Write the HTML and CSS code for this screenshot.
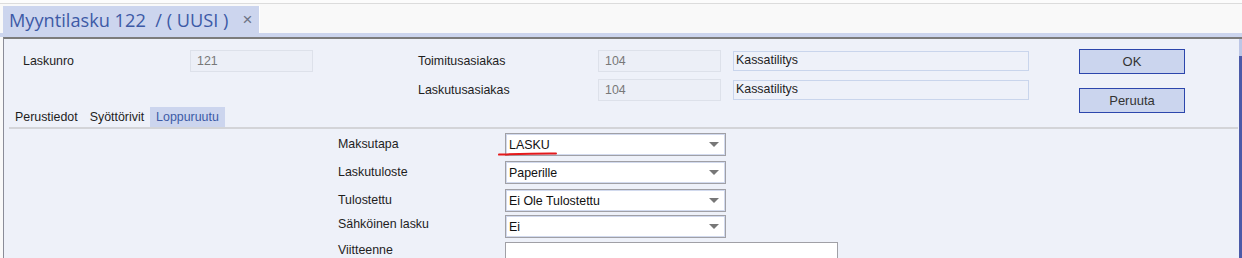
FILE: index.html
```html
<!DOCTYPE html>
<html lang="fi">
<head>
    <meta charset="UTF-8">
    <meta name="viewport" content="width=device-width, initial-scale=1.0">
    <title>Myyntilasku 122</title>
    <link rel="stylesheet" href="styles.css">
</head>
<body>
    <div class="topline"></div>
    <div class="docbar">
        <div class="doctab">
            <span class="doctab-title">Myyntilasku 122 &nbsp;/ ( UUSI )</span>
            <span class="doctab-close">×</span>
        </div>
    </div>
    <div class="docbar-under"></div>

    <div class="window">
        <div class="content">
            <div class="head">
                <div class="head-fields">
                    <span class="label">Laskunro</span>
                    <div class="field field-ro">121</div>
                    <span></span>
                    <span class="label">Toimitusasiakas</span>
                    <div class="field field-ro">104</div>
                    <span></span>
                    <div class="field field-name">Kassatilitys</div>

                    <span></span>
                    <span></span>
                    <span></span>
                    <span class="label">Laskutusasiakas</span>
                    <div class="field field-ro">104</div>
                    <span></span>
                    <div class="field field-name">Kassatilitys</div>
                </div>
                <div class="head-buttons">
                    <button class="btn">OK</button>
                    <button class="btn btn-cancel">Peruuta</button>
                </div>
            </div>

            <div class="tabs">
                <span class="tab">Perustiedot</span>
                <span class="tab">Syöttörivit</span>
                <span class="tab tab-active">Loppuruutu</span>
            </div>

            <div class="form">
                <span class="label">Maksutapa</span>
                <div class="select select-marked">
                    <span>LASKU</span>
                    <span class="arrow"></span>
                    <svg class="mark" width="60" height="6" viewBox="0 0 60 6">
                        <path d="M1 3.6 C 15 3.2, 35 2.4, 58 2.6" stroke="#e4191b" stroke-width="2" fill="none" stroke-linecap="round"/>
                    </svg>
                </div>

                <span class="label">Laskutuloste</span>
                <div class="select"><span>Paperille</span><span class="arrow"></span></div>

                <span class="label">Tulostettu</span>
                <div class="select"><span>Ei Ole Tulostettu</span><span class="arrow"></span></div>

                <span class="label label-up">Sähköinen lasku</span>
                <div class="select"><span>Ei</span><span class="arrow"></span></div>

                <span class="label label-last">Viitteenne</span>
                <div class="textbox"></div>
            </div>
        </div>
        <div class="scrollbar"><div class="scroll-thumb"></div></div>
    </div>
</body>
</html>
```

FILE: styles.css
```css
body {
    margin: 0;
    background-color: #f9f9f9;
    font-family: "Liberation Sans", Arial, sans-serif;
    font-size: 12.4px;
    color: #1e1e1e;
    height: 258px;
    overflow: hidden;
}
.topline {
    height: 3px;
    background-color: #fcfcfc;
    border-bottom: 1px solid #dcdcdc;
}
.docbar {
    height: 29px;
    padding-left: 3px;
    display: flex;
    align-items: flex-end;
}
.doctab {
    width: 257px;
    height: 27px;
    background-color: #ccd5ee;
    border-right: 1px solid #fff;
    display: flex;
    align-items: center;
    padding-left: 6px;
    box-sizing: border-box;
}
.doctab-title {
    font-family: "Open Sans", "Noto Sans", sans-serif;
    font-size: 18.2px;
    color: #3d5aa6;
    white-space: nowrap;
}
.doctab-close {
    margin-left: 14px;
    color: #6c7284;
    font-size: 17px;
}
.docbar-under {
    height: 4px;
    background-color: #ccd5ee;
}
.window {
    margin-left: 3px;
    height: 219px;
    overflow: hidden;
    border-top: 2px solid #7c7c7c;
    border-left: 1px solid #8a8c98;
    background-color: #eef1f9;
    display: flex;
}
.content {
    flex: 1;
}
.scrollbar {
    width: 3px;
    background-color: #4b5aa8;
}
.scroll-thumb {
    height: 17px;
    background-color: #bcc6e6;
}

/* cabecera */
.head {
    height: 68px;
    padding-left: 19px;
    display: flex;
    align-items: flex-start;
}
.head-fields {
    margin-top: 11px;
    display: grid;
    grid-template-columns: 167px 123px 105px 180px 123px 12px 296px;
    grid-template-rows: 22px 22px;
    row-gap: 7px;
    align-items: center;
}
.label {
    white-space: nowrap;
}
.field {
    box-sizing: border-box;
    height: 22px;
    padding: 3px 6px;
    border: 1px solid #dde1ea;
    background-color: #eceff7;
    color: #787878;
}
.field-name {
    height: 20px;
    padding: 1px 2px;
    border-color: #c9d5ec;
    background-color: #eef1f9;
    color: #1e1e1e;
}
.head-buttons {
    margin-left: 50px;
    margin-top: 10px;
    display: flex;
    flex-direction: column;
    gap: 14px;
}
.btn {
    width: 106px;
    height: 25px;
    background-color: #cbd5ee;
    border: 1px solid #2c46ac;
    color: #333;
    font-family: "Liberation Sans", Arial, sans-serif;
    font-size: 13px;
    padding: 0;
}

/* pestañas */
.tabs {
    margin-left: 5px;
    margin-right: 1px;
    display: flex;
    height: 20px;
    border-bottom: 2px solid #d3d4d8;
}
.tab {
    padding: 0 6px;
    line-height: 20px;
}
.tab-active {
    background-color: #ccd5ee;
    color: #3d5aa6;
}

/* formulario */
.form {
    margin-top: 4px;
    padding-left: 334px;
    display: grid;
    grid-template-columns: 167px auto;
    grid-template-rows: 28px 28px 26px 27px 16px;
    align-items: start;
    justify-content: start;
}
.form .label {
    line-height: 23px;
}
.form .label-up {
    line-height: 19px;
}
.form .label-last {
    line-height: 17px;
}
.select {
    position: relative;
    box-sizing: border-box;
    width: 221px;
    height: 23px;
    border: 1px solid #a0a0a6;
    box-shadow: inset 0 0 0 1px #d2daee;
    background-color: #fff;
    display: flex;
    align-items: center;
    justify-content: space-between;
    padding: 0 6px 0 3px;
    color: #111;
}
.arrow {
    width: 0;
    height: 0;
    border-left: 5px solid transparent;
    border-right: 5px solid transparent;
    border-top: 5px solid #777;
}
.mark {
    position: absolute;
    left: -8px;
    top: 17px;
}
.textbox {
    box-sizing: border-box;
    width: 333px;
    height: 16px;
    border: 1px solid #a0a0a6;
    border-bottom: none;
    background-color: #fff;
}
```
